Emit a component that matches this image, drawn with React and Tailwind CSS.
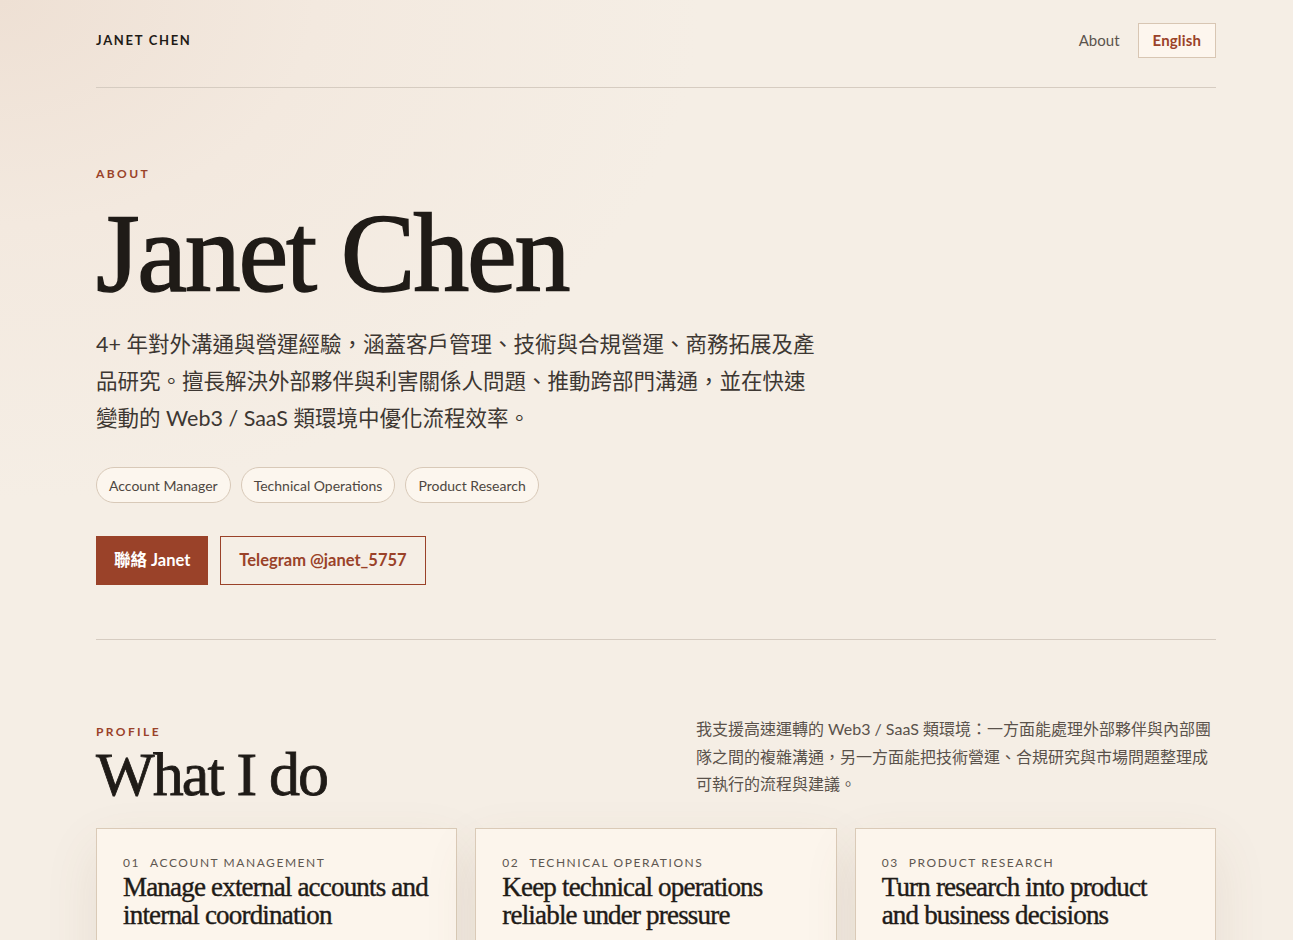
export default function App() {
  const sans = "font-['Lato','Noto_Sans_CJK_TC',sans-serif]";
  const serif = "font-['Liberation_Serif','Noto_Serif_CJK_TC',serif]";

  const chips = ["Account Manager", "Technical Operations", "Product Research"];
  const cards = [
    {
      num: "01",
      label: "ACCOUNT MANAGEMENT",
      lines: ["Manage external accounts and", "internal coordination"],
    },
    {
      num: "02",
      label: "TECHNICAL OPERATIONS",
      lines: ["Keep technical operations", "reliable under pressure"],
    },
    {
      num: "03",
      label: "PRODUCT RESEARCH",
      lines: ["Turn research into product", "and business decisions"],
    },
  ];

  return (
    <div
      className={`min-h-[940px] w-full overflow-hidden bg-[#f5eee5] bg-[radial-gradient(ellipse_700px_500px_at_0%_0%,#eee0d4_0%,#f3e9df_45%,#f5eee5_100%)] text-[#1f1b17] ${sans}`}
    >
      <div className="pl-[96px] pr-[77px]">
        <header className="flex h-[88px] items-center justify-between border-b border-[#d6ccc1] pb-[6px]">
          <div className="text-[13px] font-bold tracking-[0.13em] text-[#1f1b17]">
            JANET CHEN
          </div>
          <nav className="flex items-center gap-[18px]">
            <a className="text-[15px] text-[#5b544d]">About</a>
            <button className="h-[35px] border border-[#d8c6b3] bg-[#fdf6ee] px-[14px] text-[15px] font-bold tracking-[0.01em] text-[#9a4229]">
              English
            </button>
          </nav>
        </header>

        <section className="border-b border-[#d6ccc1] pb-[54px] pt-[77px]">
          <div className="text-[12px] font-bold tracking-[0.2em] text-[#9a4229]">
            ABOUT
          </div>
          <h1
            className={`mt-[14px] text-[112px] leading-[112px] tracking-[-0.02em] text-[#1f1b17] [-webkit-text-stroke:1.5px_#1f1b17] ${serif}`}
          >
            Janet Chen
          </h1>
          <p className="mt-[17px] max-w-[730px] text-[21.5px] leading-[37px] text-[#3d3732]">
            4+ 年對外溝通與營運經驗，涵蓋客戶管理、技術與合規營運、商務拓展及產品研究。擅長解決外部夥伴與利害關係人問題、推動跨部門溝通，並在快速變動的 Web3 / SaaS 類環境中優化流程效率。
          </p>
          <div className="mt-[30px] flex gap-[10px]">
            {chips.map((c) => (
              <span
                key={c}
                className="flex h-[36px] items-center rounded-full border border-[#d8c9b8] bg-[#fcf6ee] px-[12px] text-[14px] text-[#4e4741]"
              >
                {c}
              </span>
            ))}
          </div>
          <div className="mt-[33px] flex gap-[12px]">
            <button className="h-[49px] bg-[#9a4229] px-[18px] text-[16.5px] font-bold text-white">
              聯絡 Janet
            </button>
            <button className="h-[49px] border border-[#9a4229] px-[18px] text-[16.5px] font-bold text-[#9a4229]">
              Telegram @janet_5757
            </button>
          </div>
        </section>

        <section className="pt-[85px]">
          <div className="flex items-start justify-between">
            <div>
              <div className="text-[12px] font-bold leading-[14px] tracking-[0.2em] text-[#9a4229]">
                PROFILE
              </div>
              <h2
                className={`text-[62px] leading-[71px] tracking-[-0.03em] text-[#1f1b17] [-webkit-text-stroke:0.8px_#1f1b17] ${serif}`}
              >
                What I do
              </h2>
            </div>
            <p className="mt-[-10px] w-[520px] text-[16px] leading-[27.5px] text-[#5a524b]">
              我支援高速運轉的 Web3 / SaaS 類環境：一方面能處理外部夥伴與內部團隊之間的複雜溝通，另一方面能把技術營運、合規研究與市場問題整理成可執行的流程與建議。
            </p>
          </div>

          <div className="mt-[18px] grid grid-cols-3 gap-[18px]">
            {cards.map((c) => (
              <div
                key={c.num}
                className="h-[160px] border border-[#dacab7] bg-[#fcf5ec] px-[26px] pt-[25px] shadow-[0_20px_50px_rgba(120,90,60,0.10)]"
              >
                <div className="flex gap-[10px] text-[12px] tracking-[0.13em] text-[#5e5750]">
                  <span>{c.num}</span>
                  <span>{c.label}</span>
                </div>
                <h3
                  className={`mt-[1px] text-[27px] leading-[28px] tracking-[-0.03em] text-[#1f1b17] [-webkit-text-stroke:0.4px_#1f1b17] ${serif}`}
                >
                  {c.lines[0]}
                  <br />
                  {c.lines[1]}
                </h3>
              </div>
            ))}
          </div>
        </section>
      </div>
    </div>
  );
}
